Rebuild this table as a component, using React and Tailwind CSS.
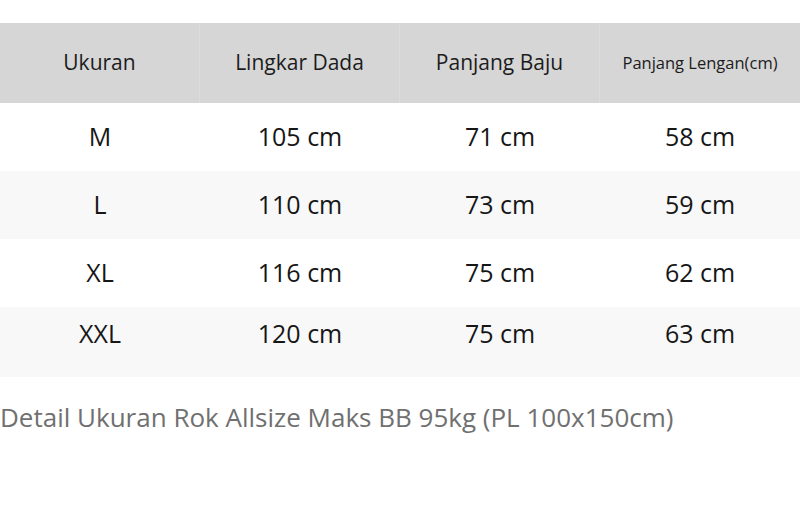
import React from "react";

const rows = [
  ["M", "105 cm", "71 cm", "58 cm"],
  ["L", "110 cm", "73 cm", "59 cm"],
  ["XL", "116 cm", "75 cm", "62 cm"],
  ["XXL", "120 cm", "75 cm", "63 cm"],
];

export default function App() {
  return (
    <div
      className="w-[800px] h-[507px] bg-white overflow-hidden pt-[23px]"
      style={{ fontFamily: '"Open Sans", "Noto Sans", sans-serif' }}
    >
      <div className="grid grid-cols-4 h-[80px] bg-[#d6d6d6] text-[#1c1c1c]">
        <div className="flex items-center justify-center border-r border-[#dcdcdc] text-[21px]">Ukuran</div>
        <div className="flex items-center justify-center border-r border-[#dcdcdc] text-[21px]">Lingkar Dada</div>
        <div className="flex items-center justify-center border-r border-[#dcdcdc] text-[21px]">Panjang Baju</div>
        <div className="flex items-center justify-center text-[16.5px]">Panjang Lengan(cm)</div>
      </div>
      {rows.map((r, i) => (
        <div
          key={i}
          className={
            "grid grid-cols-4 text-[25px] text-[#161616] " +
            (i % 2 === 1 ? "bg-[#f8f8f8] " : "bg-white ") +
            (i === 3 ? "h-[70px] pb-[17px]" : "h-[68px]")
          }
        >
          {r.map((c, j) => (
            <div key={j} className="flex items-center justify-center">
              {c}
            </div>
          ))}
        </div>
      ))}
      <div className="mt-[23px] text-[26px] leading-[34px] text-[#707070]">
        Detail Ukuran Rok Allsize Maks BB 95kg (PL 100x150cm)
      </div>
    </div>
  );
}
